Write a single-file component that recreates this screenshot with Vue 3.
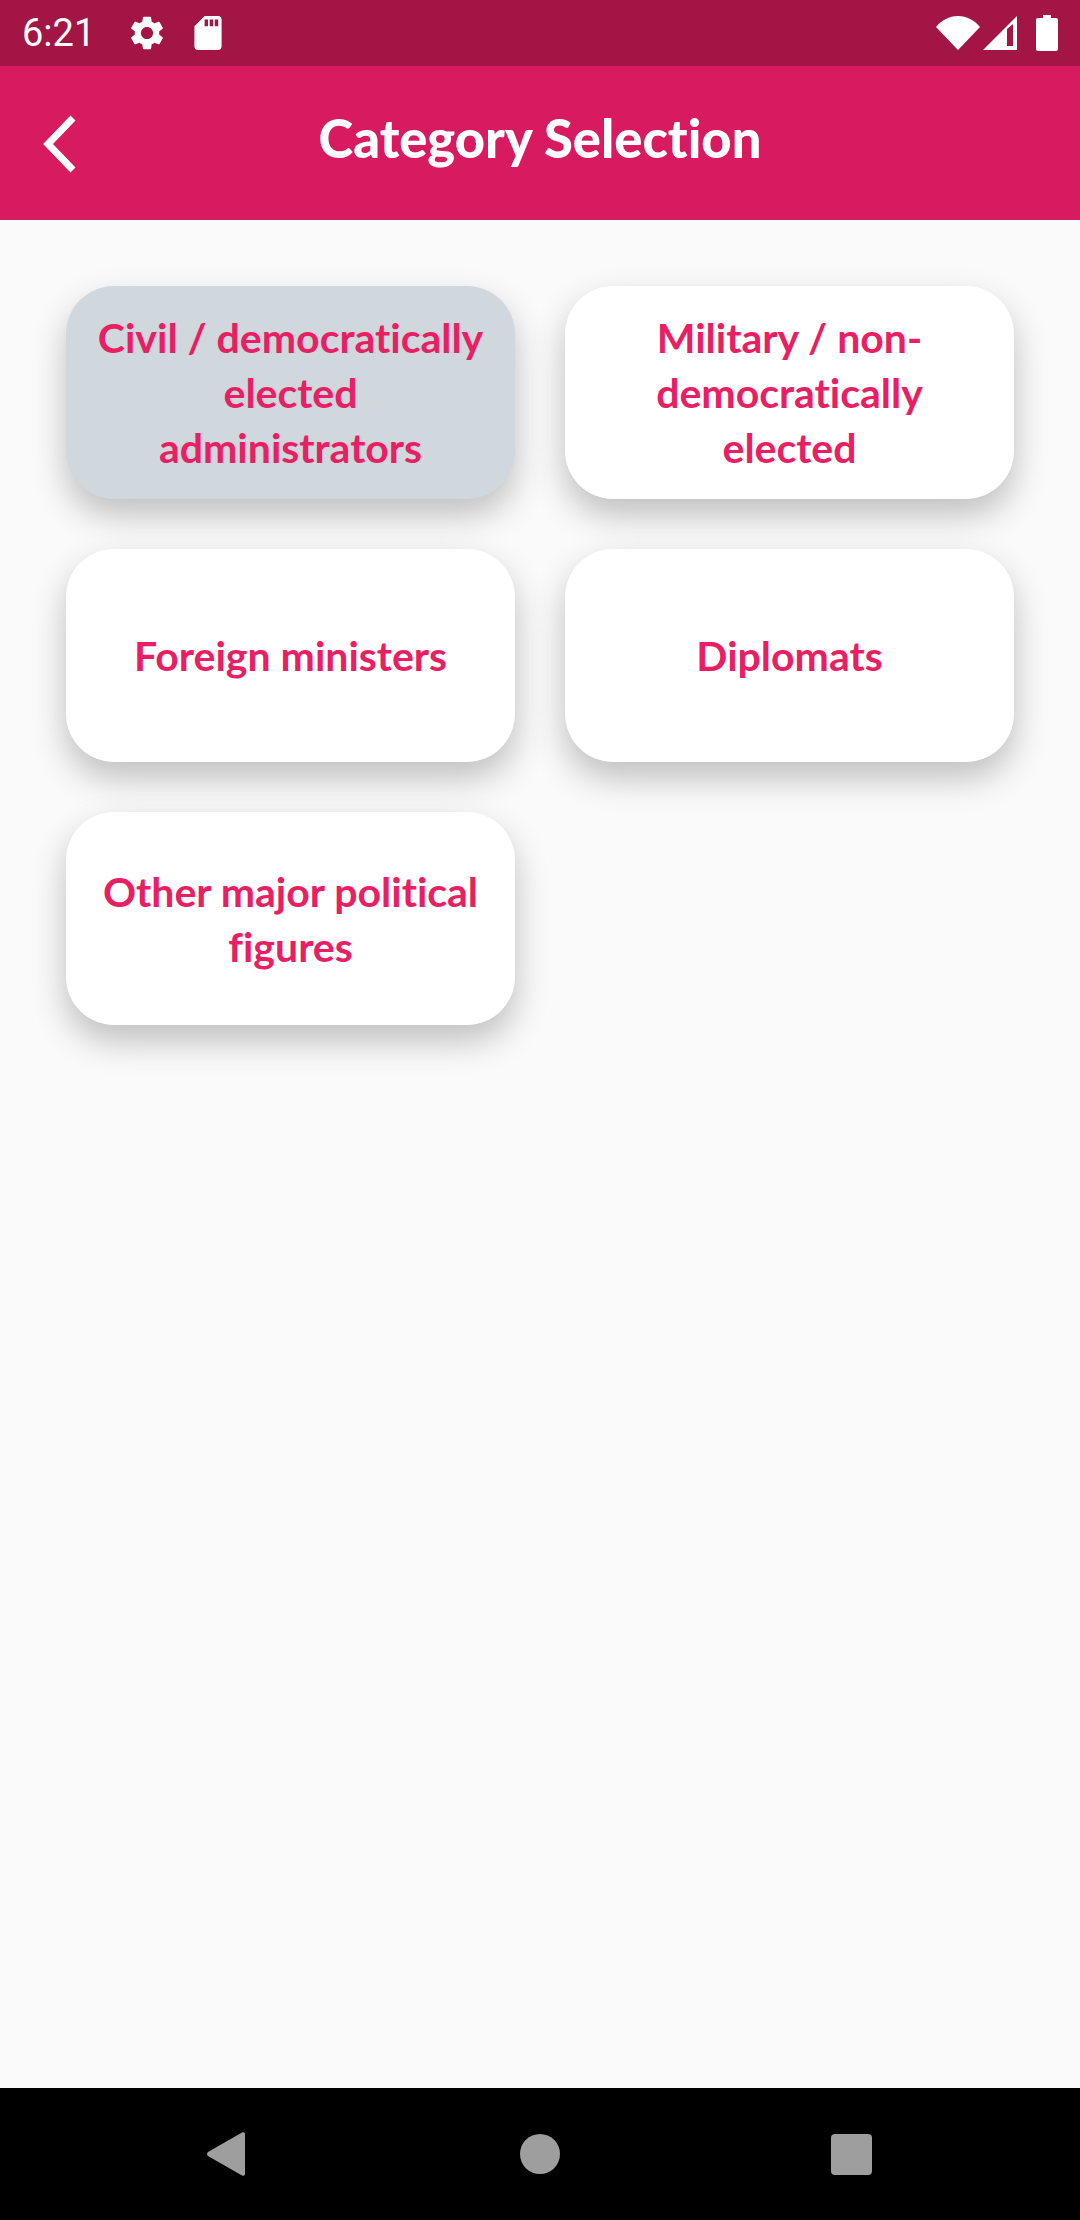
<script setup>
const cards = [
  { label: 'Civil / democratically elected administrators', selected: true },
  { label: 'Military / non-democratically elected' },
  { label: 'Foreign ministers' },
  { label: 'Diplomats' },
  { label: 'Other major political figures' }
]
</script>

<template>
  <div class="screen">
    <div class="status">
      <span class="time">6:21</span>
      <svg class="gear" viewBox="2 2 20 20"><path fill="#fff" d="M19.14 12.94c.04-.3.06-.61.06-.94 0-.32-.02-.64-.07-.94l2.03-1.58a.49.49 0 0 0 .12-.61l-1.92-3.32a.49.49 0 0 0-.59-.22l-2.39.96c-.5-.38-1.03-.7-1.62-.94l-.36-2.54a.48.48 0 0 0-.48-.41h-3.84c-.24 0-.43.17-.47.41l-.36 2.54c-.59.24-1.13.57-1.62.94l-2.39-.96a.49.49 0 0 0-.59.22L2.74 8.87c-.12.21-.08.47.12.61l2.03 1.58c-.05.3-.09.63-.09.94s.02.64.07.94l-2.03 1.58a.49.49 0 0 0-.12.61l1.92 3.32c.12.22.37.29.59.22l2.39-.96c.5.38 1.03.7 1.62.94l.36 2.54c.05.24.24.41.48.41h3.84c.24 0 .44-.17.47-.41l.36-2.54c.59-.24 1.13-.56 1.62-.94l2.39.96c.22.08.47 0 .59-.22l1.92-3.32c.12-.22.07-.47-.12-.61l-2.01-1.58zM12 15.6c-1.98 0-3.6-1.62-3.6-3.6s1.62-3.6 3.6-3.6 3.6 1.62 3.6 3.6-1.62 3.6-3.6 3.6z"/></svg>
      <svg class="sd" viewBox="4 2 16 20"><path fill="#fff" d="M18 2h-8L4.02 8 4 20c0 1.1.9 2 2 2h12c1.1 0 2-.9 2-2V4c0-1.1-.9-2-2-2zm-6 6h-2V4h2v4zm3 0h-2V4h2v4zm3 0h-2V4h2v4z"/></svg>
      <span class="spacer"></span>
      <svg class="wifi" viewBox="0 0 44 34"><path fill="#fff" d="M0 11C6 4 13 0 22 0s16 4 22 11L22 34z"/></svg>
      <svg class="signal" viewBox="0 0 34 34"><path fill="#fff" fill-rule="evenodd" d="M0 34 34 0v34zM24 13v17h6V8z"/></svg>
      <svg class="battery" viewBox="0 0 22 36"><path fill="#fff" d="M7 0h8v3h5a2 2 0 0 1 2 2v29a2 2 0 0 1-2 2H2a2 2 0 0 1-2-2V5a2 2 0 0 1 2-2h5z"/></svg>
    </div>
    <header class="appbar">
      <svg class="back" viewBox="0 0 36 58"><path d="M31 3 6 29l25 26" fill="none" stroke="#fff" stroke-width="7"/></svg>
      <h1 class="title">Category Selection</h1>
    </header>
    <main class="content">
      <button v-for="c in cards" :key="c.label" class="card" :class="{ selected: c.selected }">{{ c.label }}</button>
    </main>
    <nav class="navbar">
      <svg class="nav-back" viewBox="0 0 38 44"><path fill="#9e9e9e" d="M1 20 35 .6c1.5-.8 3 0 3 1.4v40c0 1.4-1.5 2.2-3 1.4L1 24c-1.3-1-1.3-3 0-4z"/></svg>
      <span class="nav-home"></span>
      <span class="nav-recent"></span>
    </nav>
  </div>
</template>

<style scoped>
.screen {
  width: 1080px;
  height: 2220px;
  display: flex;
  flex-direction: column;
  background: #fafafa;
  overflow: hidden;
}
.status {
  height: 66px;
  flex: none;
  display: flex;
  align-items: center;
  background: #a31545;
  padding: 0 22px 0 22px;
}
.time {
  font: 400 38px Roboto, sans-serif;
  color: #fff;
  width: 108px;
}
.gear { width: 34px; height: 34px; }
.sd { width: 28px; height: 34px; margin-left: 30px; }
.spacer { flex: 1; }
.wifi { width: 44px; height: 34px; }
.signal { width: 34px; height: 34px; margin-left: 3px; }
.battery { width: 22px; height: 36px; margin-left: 19px; }
.appbar {
  height: 154px;
  flex: none;
  background: #d81b60;
  display: flex;
  align-items: center;
  justify-content: center;
  position: relative;
}
.back { position: absolute; left: 42px; top: 49px; width: 36px; height: 58px; }
.title {
  margin: 0 0 10px;
  font: 900 52.5px/60px Lato, sans-serif;
  font-variant-ligatures: none;
  color: #fff;
}
.content {
  flex: 1;
  display: grid;
  grid-template-columns: 449px 449px;
  grid-auto-rows: 213px;
  align-content: start;
  gap: 50px;
  padding: 66px 66px 0;
}
.card {
  border: none;
  border-radius: 48px;
  background: #fff;
  box-shadow: 0 16px 34px rgba(0, 0, 0, 0.24);
  padding: 0 28px;
  font: 700 41px/55px Lato, sans-serif;
  font-variant-ligatures: none;
  color: #e91e63;
  text-align: center;
}
.card.selected { background: #d0d7dd; }
.navbar {
  height: 132px;
  flex: none;
  background: #000;
  position: relative;
}
.nav-back { position: absolute; left: 207px; top: 44px; width: 38px; height: 44px; }
.nav-home { position: absolute; left: 520px; top: 46px; width: 40px; height: 40px; border-radius: 50%; background: #9e9e9e; }
.nav-recent { position: absolute; left: 831px; top: 46px; width: 41px; height: 41px; border-radius: 4px; background: #9e9e9e; }
</style>
